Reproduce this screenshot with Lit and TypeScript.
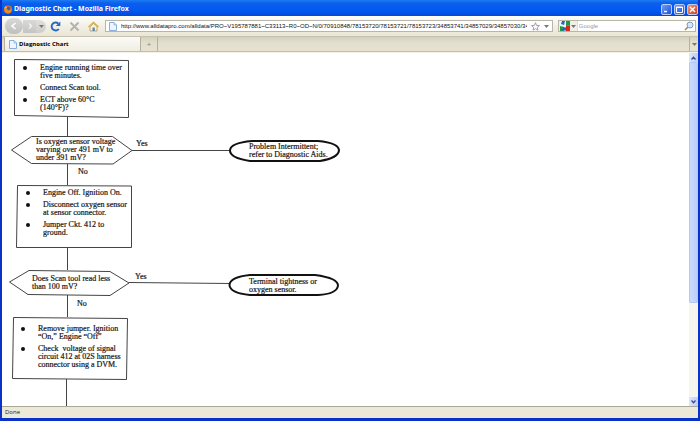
import { LitElement, html, css, svg } from "lit";
import { customElement } from "lit/decorators.js";

@customElement("flow-chart")
class FlowChart extends LitElement {
  static styles = css`
    :host {
      display: block;
      position: relative;
      flex: 1;
      min-width: 0;
      overflow: hidden;
      background: #fff;
      color: #111;
      font: 8px/8px "Liberation Serif", serif;
      -webkit-text-stroke: 0.2px #222;
    }
    .lines {
      position: absolute;
      left: 0;
      top: 0;
      width: 400px;
      height: 353px;
      fill: none;
      stroke: #444;
      stroke-width: 1;
    }
    .terminal { stroke: #111; stroke-width: 2; }
    .node { position: absolute; white-space: nowrap; }
    .steps { margin: 0; padding: 0; list-style: none; }
    .steps li { position: relative; margin-bottom: 4px; padding-left: 17px; }
    .steps li::before {
      content: "";
      position: absolute;
      left: 0;
      top: 2px;
      width: 4px;
      height: 4px;
      border-radius: 50%;
      background: #111;
    }
    .s1 { left: 21px; top: 11px; }
    .s2 { left: 24px; top: 136px; }
    .s3 { left: 19px; top: 272px; }
    .q1 { left: 34px; top: 85px; }
    .q2 { left: 30px; top: 222px; }
    .y1 { left: 134px; top: 87px; }
    .y2 { left: 133px; top: 220px; }
    .n1 { left: 76px; top: 115px; }
    .n2 { left: 75px; top: 247px; }
    .t1 { left: 247px; top: 90px; }
    .t2 { left: 247px; top: 225px; }
  `;
  render() {
    return html`
      <svg class="lines" viewBox="2 53 400 353" aria-hidden="true">
        <path d="M14.5 59.5L128.500 60.500V117.500L14.500 115.500Z" />
        <path d="M11.500 150L31.500 136.500L112.500 136.500L132 150.500L113 164L31.500 163.500Z" />
        <path d="M17.500 185.500L131.500 186V247.500H16.500Z" />
        <path d="M9.500 282L29 270.500L110 271.500L129 283L110 295.500L28 294.500Z" />
        <path d="M13.500 317.500L127.500 318.500L126.500 379.500L12.500 378.500Z" />
        <path d="M67.500 117V136M67.500 164V185M67.500 247V270M67.500 295V317M66.500 379V406" />
        <path d="M132 150.500H230M129 282.500L230 283.500" />
        <path class="terminal" d="M252 141H318Q339 143 339 150.500Q338 158 320 161H250Q230 158 230 150.500Q230 143 252 141Z" />
        <path class="terminal" d="M250 275H315Q338 278 338 285.500Q337 294 318 295H250Q230 293 229.500 285Q230 277 250 275Z" />
      </svg>
      <ul class="node steps s1">
        <li>Engine running time over<br />five minutes.</li>
        <li>Connect Scan tool.</li>
        <li>ECT above 60°C<br />(140°F)?</li>
      </ul>
      <div class="node q1">Is oxygen sensor voltage<br />varying over 491 mV to<br />under 391 mV?</div>
      <div class="node y1">Yes</div>
      <div class="node n1">No</div>
      <div class="node t1">Problem Intermittent;<br />refer to Diagnostic Aids.</div>
      <ul class="node steps s2">
        <li>Engine Off. Ignition On.</li>
        <li>Disconnect oxygen sensor<br />at sensor connector.</li>
        <li>Jumper Ckt. 412 to<br />ground.</li>
      </ul>
      <div class="node q2">Does Scan tool read less<br />than 100 mV?</div>
      <div class="node y2">Yes</div>
      <div class="node n2">No</div>
      <div class="node t2">Terminal tightness or<br />oxygen sensor.</div>
      <ul class="node steps s3">
        <li>Remove jumper. Ignition<br />“On,” Engine “Off”</li>
        <li>Check&nbsp; voltage of signal<br />circuit 412 at 02S harness<br />connector using a DVM.</li>
      </ul>
    `;
  }
}

const pageIcon = html`<svg class="page" viewBox="0 0 8 9" aria-hidden="true">
  <path d="M.5 .5H5L7.500 3V8.500H.5Z" fill="#eef5ff" stroke="#86aee0" />
  <path d="M5 .5V3H7.500" fill="#c4daf5" stroke="#86aee0" stroke-width=".7" />
</svg>`;
const caret = svg`<path d="M0 0H5L2.500 3Z" fill="#777" />`;

@customElement("app-root")
class AppRoot extends LitElement {
  static styles = css`
    :host {
      display: flex;
      flex-direction: column;
      box-sizing: border-box;
      height: 100vh;
      border: solid #0a31c8;
      border-width: 0 2px 3px;
      background: #ece9d8;
      font: 6px/10px "Open Sans", sans-serif;
      color: #222;
      overflow: hidden;
    }
    svg { display: block; flex: none; }
    button {
      display: flex;
      align-items: center;
      justify-content: center;
      flex: none;
      padding: 0;
      border: 0;
      background: none;
      font: inherit;
    }
    input {
      flex: 1;
      min-width: 0;
      padding: 0;
      border: 0;
      outline: 0;
      background: none;
      font: 6px/10px "Liberation Sans", sans-serif;
      color: #111;
    }
    .title {
      display: flex;
      align-items: center;
      gap: 2px;
      height: 16px;
      flex: none;
      padding: 2px 0 0 2px;
      box-sizing: border-box;
      background: linear-gradient(#1d7cf0, #0a5fee 20%, #0357ee 70%, #0148d8);
    }
    .title h1 { flex: 1; margin: 0; font: bold 7px/12px "Noto Sans", sans-serif; color: #fff; }
    .fox { width: 8px; height: 9px; }
    .win {
      width: 11px;
      height: 11px;
      box-sizing: border-box;
      border: 1px solid #b9cdf8;
      border-radius: 2px;
      background: linear-gradient(135deg, #6f9cf5, #1e50d8);
    }
    .close { background: linear-gradient(135deg, #f09a7a, #cf3d16); }
    .win svg { width: 9px; height: 9px; }
    .toolbar {
      display: flex;
      align-items: center;
      height: 21px;
      flex: none;
      box-sizing: border-box;
      padding: 0 2px 0 3px;
      border-bottom: 1px solid #c5c1ae;
      background: linear-gradient(#fdfdfb, #f2f0e6 50%, #e9e6d6);
    }
    .nav { display: flex; align-items: center; }
    .back {
      width: 18px;
      height: 16px;
      border-radius: 8px;
      background: linear-gradient(#d9d9d7, #bfbfbd);
    }
    .forward {
      width: 13px;
      height: 13px;
      background: linear-gradient(#d9d9d7, #c4c4c2);
    }
    .recent {
      width: 10px;
      height: 13px;
      border-radius: 0 7px 7px 0;
      background: linear-gradient(#e0e0dd, #cdcdca);
    }
    .tool { width: 19px; height: 16px; }
    .tool svg { width: 11px; height: 11px; }
    .arrow { width: 8px; height: 8px; }
    .caret { width: 5px; height: 3px; }
    .url, .search {
      display: flex;
      align-items: center;
      height: 12px;
      box-sizing: border-box;
      border: 1px solid #b8b6a8;
      background: #fff;
    }
    .url { flex: 1; min-width: 0; margin-left: 2px; gap: 4px; padding: 0 3px 0 3px; }
    .star { width: 9px; height: 9px; }
    .search { width: 20%; margin-left: 5px; gap: 1px; padding-right: 1px; }
    .engine { height: 10px; gap: 1px; padding: 0 1px; border-right: 1px solid #ddd; background: #f2f0e6; }
    .engine .g { width: 10px; height: 10px; }
    .search input::placeholder { color: #9a9a9a; }
    .glass { width: 10px; height: 10px; }
    .page { width: 8px; height: 9px; }
    .tabs {
      display: flex;
      align-items: stretch;
      height: 15px;
      flex: none;
      box-sizing: border-box;
      padding-left: 2px;
      border-bottom: 1px solid #c2beaa;
      background: linear-gradient(#d3cfbd, #e2dfcf 40%, #e5e2d2);
    }
    .tab {
      display: flex;
      align-items: center;
      gap: 2px;
      width: 137px;
      box-sizing: border-box;
      padding-left: 4px;
      border: solid #b5b19e;
      border-width: 0 1px;
      background: linear-gradient(#fbfaf6, #f0eee2);
      font-weight: bold;
      color: #000;
      justify-content: flex-start;
    }
    .add { width: 17px; border-right: 1px solid #b5b19e; color: #8a8778; font-size: 8px; }
    .all { width: 9px; margin-left: auto; border-left: 1px solid #b5b19e; }
    .view { display: flex; flex: 1; min-height: 0; border-top: 1px solid #f4f2e8; }
    .bar {
      display: flex;
      flex-direction: column;
      width: 9px;
      flex: none;
      background: #f5f4ee;
    }
    .bar button { height: 9px; background: linear-gradient(90deg, #dbe6fd, #b9cdf9); border-radius: 1px; }
    .chev { width: 5px; height: 4px; }
    .track { flex: 1; }
    .thumb {
      height: 72%;
      box-sizing: border-box;
      border: 1px solid #b4c8f6;
      border-radius: 1px;
      background: linear-gradient(90deg, #cbdafd, #bcd0fb);
    }
    .status {
      height: 12px;
      flex: none;
      box-sizing: border-box;
      padding-left: 3px;
      border-top: 1px solid #aaa797;
      background: #ece9d8;
    }
  `;
  render() {
    return html`
      <header class="title">
        <svg class="fox" viewBox="0 0 8 9" aria-hidden="true">
          <circle cx="4" cy="4.500" r="4" fill="#e8751a" />
          <circle cx="4.200" cy="3.800" r="2.200" fill="#3c5db5" />
          <path d="M0 2L2.500 3.500L4.500 5.500L7.500 4Q7 8.500 4 8.500Q0 8 0 2Z" fill="#f08a1c" />
          <path d="M1 1L3 2.500L2 4Z" fill="#ffd24a" />
        </svg>
        <h1>Diagnostic Chart - Mozilla Firefox</h1>
        <button class="win" aria-label="Minimize"><svg viewBox="0 0 9 9"><path d="M2 6.500H5" stroke="#fff" stroke-width="1.500" /></svg></button>
        <button class="win" aria-label="Maximize"><svg viewBox="0 0 9 9"><path d="M1.500 2H7.500V7.500H1.500ZM1.500 2.500H7.500" fill="none" stroke="#fff" /></svg></button>
        <button class="win close" aria-label="Close"><svg viewBox="0 0 9 9"><path d="M2 2L7 7M7 2L2 7" stroke="#fff" stroke-width="1.400" /></svg></button>
      </header>
      <div class="toolbar">
        <div class="nav">
          <button class="back" aria-label="Back"><svg class="arrow" viewBox="0 0 8 8"><path d="M5.500 1L2 4L5.500 7" fill="none" stroke="#fff" stroke-width="1.600" /></svg></button>
          <button class="forward" aria-label="Forward"><svg class="arrow" viewBox="0 0 8 8"><path d="M3 1.500L5.500 4L3 6.500" fill="none" stroke="#f6f6f6" stroke-width="1.400" /></svg></button>
          <button class="recent" aria-label="Recent pages"><svg class="caret" viewBox="0 0 5 3">${caret}</svg></button>
        </div>
        <button class="tool" aria-label="Reload"><svg viewBox="0 0 11 11"><path d="M8.800 8A4 4 0 1 1 8.300 2.500" fill="none" stroke="#2468c8" stroke-width="1.900" /><path d="M10.300 .5V5H5.800Z" fill="#2468c8" /></svg></button>
        <button class="tool" aria-label="Stop"><svg viewBox="0 0 11 11"><path d="M1.500 1.500L9.500 9.500M9.500 1.500L1.500 9.500" stroke="#b3b3b1" stroke-width="2" /></svg></button>
        <button class="tool" aria-label="Home"><svg viewBox="0 0 11 11"><path d="M2 5.500V10H9V5.500L5.500 2.500Z" fill="#fbf3cf" stroke="#a99a62" stroke-width=".8" /><path d="M.5 6L5.500 1.500L10.500 6" fill="none" stroke="#d9b040" stroke-width="1.400" /><path d="M4.500 6.500H6.800V10H4.500Z" fill="#5d84b8" /></svg></button>
        <div class="url">
          ${pageIcon}
          <input aria-label="Address" value="http://www.alldatapro.com/alldata/PRO~V195787881~C33113~R0~OD~N/0/70910848/78153720/78153721/78153723/34853741/34857029/34857030/34857032" />
          <button aria-label="Bookmark"><svg class="star" viewBox="0 0 9 9"><path d="M4.500 .7L5.600 3.400L8.500 3.600L6.300 5.400L7 8.200L4.500 6.700L2 8.200L2.700 5.400L.5 3.600L3.400 3.400Z" fill="#fff" stroke="#8c8c8c" stroke-width=".8" /></svg></button>
          <button aria-label="History"><svg class="caret" viewBox="0 0 5 3">${caret}</svg></button>
        </div>
        <div class="search">
          <button class="engine" aria-label="Search engine">
            <svg class="g" viewBox="0 0 10 10"><path d="M0 0H10V10H0Z" fill="#eef3fc" /><path d="M6 0H10V5L6 4Z" fill="#1c9a3c" /><path d="M6 4L10 5V10H6Z" fill="#d8281e" /><path d="M0 5L4 6V10H0Z" fill="#1c9a3c" /><path d="M2 0H5L4 4L1 3Z" fill="#2a62d0" /><path d="M3 6L6 6.500V9.500H2Z" fill="#2a62d0" /></svg>
            <svg class="caret" viewBox="0 0 5 3">${caret}</svg>
          </button>
          <input aria-label="Search" placeholder="Google" />
          <button aria-label="Go"><svg class="glass" viewBox="0 0 10 10"><path d="M4.200 5.800L1 9" stroke="#a9854d" stroke-width="1.600" /><circle cx="6" cy="4" r="3" fill="#d5e8fb" stroke="#7d9cc4" /></svg></button>
        </div>
      </div>
      <nav class="tabs">
        <button class="tab">${pageIcon}Diagnostic Chart</button>
        <button class="add" aria-label="New tab">+</button>
        <button class="all" aria-label="All tabs"><svg class="caret" viewBox="0 0 5 3">${caret}</svg></button>
      </nav>
      <main class="view">
        <flow-chart></flow-chart>
        <div class="bar">
          <button aria-label="Scroll up"><svg class="chev" viewBox="0 0 5 4"><path d="M.5 3.500L2.500 1.200L4.500 3.500" fill="none" stroke="#3c527e" stroke-width="1.300" /></svg></button>
          <div class="track"><div class="thumb"></div></div>
          <button aria-label="Scroll down"><svg class="chev" viewBox="0 0 5 4"><path d="M.5 .5L2.500 2.800L4.500 .5" fill="none" stroke="#3c527e" stroke-width="1.300" /></svg></button>
        </div>
      </main>
      <footer class="status">Done</footer>
    `;
  }
}
